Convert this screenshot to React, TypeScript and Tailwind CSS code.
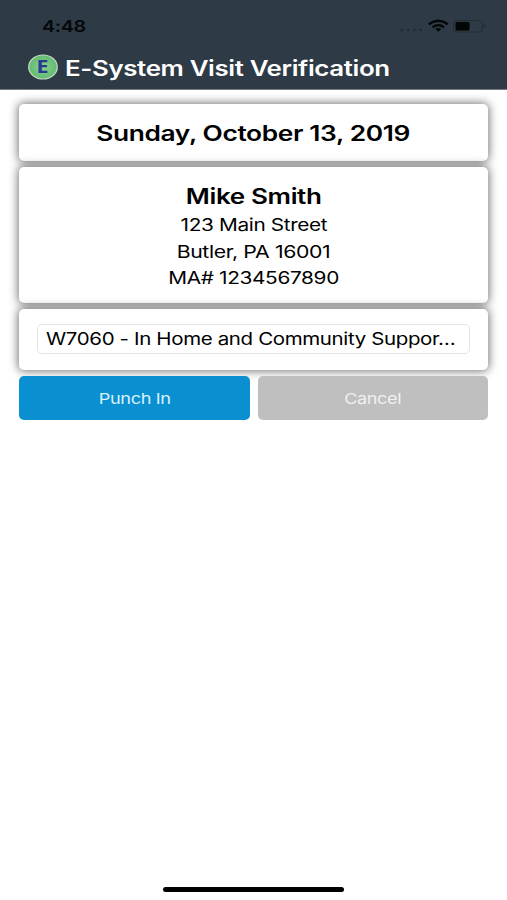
import type { ReactNode } from "react";

const card =
  "flex flex-col items-center rounded-[5px] bg-white shadow-[0_0_10px_1px_rgba(0,0,0,0.55)]";

function Wide({ className, children }: { className: string; children: ReactNode }) {
  return <span className={`inline-block tracking-[-0.3px] whitespace-nowrap ${className}`}>{children}</span>;
}

function StatusIcons() {
  return (
    <svg width="90" height="18" viewBox="0 0 90 18" fill="none">
      <g fill="#202a33">
        <circle cx="3" cy="13" r="1.2" />
        <circle cx="9.200" cy="13" r="1.2" />
        <circle cx="15.400" cy="13" r="1.2" />
        <circle cx="21.600" cy="13" r="1.2" />
      </g>
      <g stroke="#030507" strokeWidth="2.3">
        <path d="M29.800 7.200Q39.300 0.300 48.800 7.200" />
        <path d="M33.500 10.300Q39.300 6 45.100 10.300" />
      </g>
      <path d="M36.300 12.100Q39.300 10 42.300 12.100L39.300 14.800Z" fill="#030507" />
      <rect x="54.500" y="3.500" width="29" height="11.500" rx="3" stroke="#222c35" />
      <rect x="56.500" y="5" width="14" height="8.500" rx="1.500" fill="#030507" />
      <path d="M85.200 7Q88 9 85.200 11Z" fill="#222c35" />
    </svg>
  );
}

export default function App() {
  return (
    <div className="flex h-[900px] w-[507px] flex-col bg-white font-['Inter','Liberation_Sans',sans-serif] text-black">
      <header className="flex h-[90px] shrink-0 flex-col border-b border-[#77777f] bg-[#2e3a45]">
        <div className="flex h-[46px] items-center justify-between pt-[6px] pr-[18px] pl-[42px]">
          <Wide className="origin-left scale-x-[1.23] text-[16px] font-semibold text-[#05080a]">4:48</Wide>
          <StatusIcons />
        </div>
        <div className="flex h-[42px] items-center pl-[28px]">
          <svg width="30" height="26" viewBox="0 0 30 26" className="shrink-0">
            <defs>
              <radialGradient id="badge">
                <stop offset="0" stopColor="#8ccf90" />
                <stop offset="1" stopColor="#62bb70" />
              </radialGradient>
            </defs>
            <ellipse cx="15" cy="13" rx="14.300" ry="12" fill="url(#badge)" stroke="#bfdcc4" strokeWidth="1.200" />
            <text x="8.500" y="19.300" fontSize="18.500" fontWeight="700" fill="#293b91" textLength="12" lengthAdjust="spacingAndGlyphs" fontFamily="Open Sans, sans-serif">E</text>
          </svg>
          <Wide className="mt-[3px] ml-[7px] origin-left scale-x-[1.232] text-[21px] font-semibold text-white">
            E-System Visit Verification
          </Wide>
        </div>
      </header>

      <main className="flex flex-col gap-[6px] px-[19px] pt-[14px]">
        <section className={`${card} h-[57px] justify-center`}>
          <Wide className="mt-[2px] scale-x-[1.254] text-[21px] font-semibold">Sunday, October 13, 2019</Wide>
        </section>
        <section className={`${card} h-[136px] pt-[15px]`}>
          <Wide className="scale-x-[1.24] text-[21px] leading-[29px] font-semibold">Mike Smith</Wide>
          <Wide className="mt-[1px] scale-x-[1.224] text-[17px] leading-[26.500px]">123 Main Street</Wide>
          <Wide className="scale-x-[1.25] text-[17px] leading-[26.500px]">Butler, PA 16001</Wide>
          <Wide className="scale-x-[1.225] text-[17px] leading-[26.500px]">MA# 1234567890</Wide>
        </section>
        <section className={`${card} h-[61px] px-[18px] pt-[15px]`}>
          <div className="flex h-[30px] w-full items-center rounded-[5px] border border-[#e4e4e4] pl-[8px]">
            <Wide className="mt-px origin-left scale-x-[1.205] text-[17px]">W7060 - In Home and Community Suppor…</Wide>
          </div>
        </section>
        <div className="relative flex gap-[8px]">
          <button className="h-[44px] flex-1 rounded-[5px] bg-[#0a90d0] text-[#d9f1fc]">
            <Wide className="ml-px scale-x-[1.21] text-[15px]">Punch In</Wide>
          </button>
          <button className="h-[44px] flex-1 rounded-[5px] bg-[#bfbfbf] text-[#f0f0f0]">
            <Wide className="scale-x-[1.205] text-[15px]">Cancel</Wide>
          </button>
        </div>
      </main>

      <div className="mt-auto mb-[8px] ml-[163px] h-[5px] w-[181px] rounded-full bg-black" />
    </div>
  );
}
